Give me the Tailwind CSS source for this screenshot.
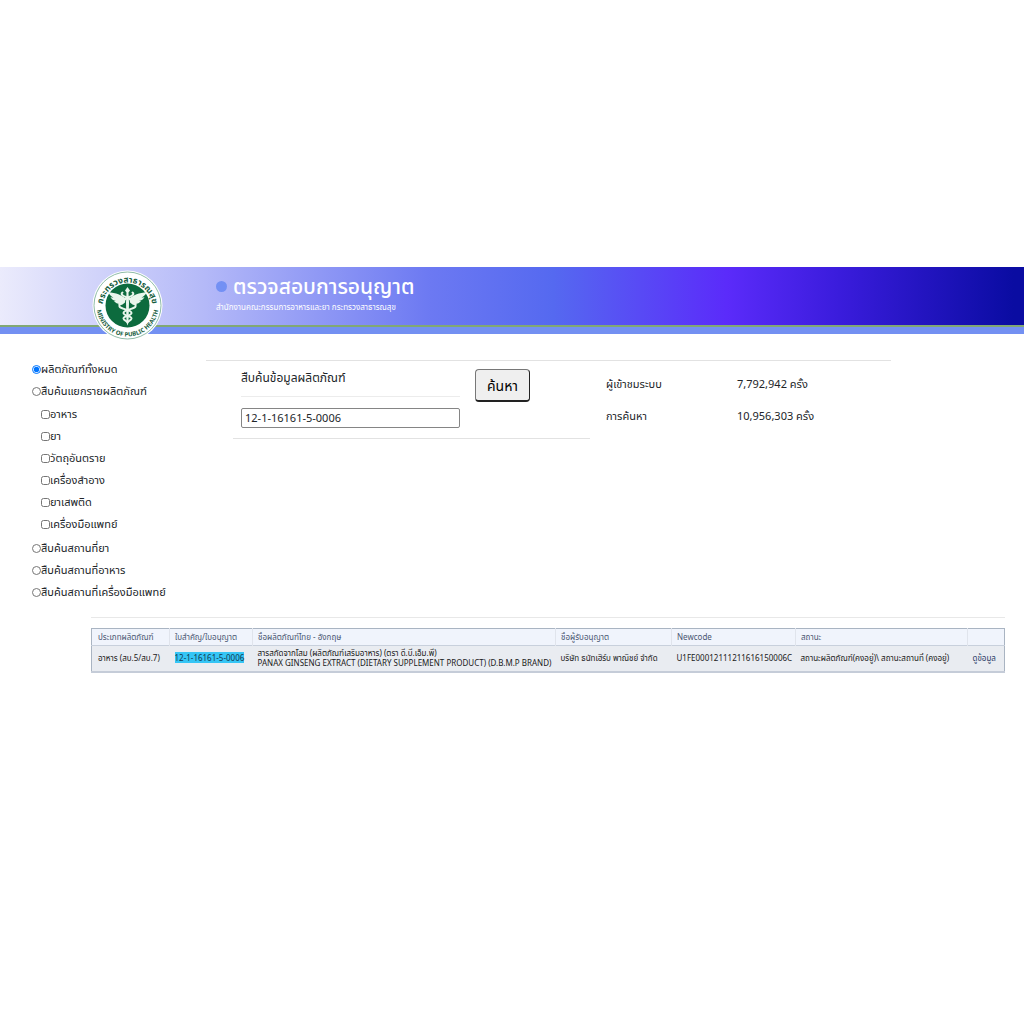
<!DOCTYPE html>
<html lang="th">
  <head>
    <meta charset="UTF-8" />
    <meta name="viewport" content="width=device-width, initial-scale=1.0" />
    <title>ตรวจสอบการอนุญาต</title>
    <script src="https://cdn.jsdelivr.net/npm/@tailwindcss/browser@4"></script>
  </head>
  <body class="bg-white pt-[267px] font-['Noto_Sans','Noto_Sans_Thai',sans-serif] text-[11px] text-[#212529]">
    <header class="relative">
      <div class="h-[58px] bg-[linear-gradient(90deg,#ebebfc_0%,#b4b9f8_20%,#6c79f2_42%,#5569f0_54%,#5b2bfa_71%,#3a1cdc_82%,#0a0ca2_99%)] pl-[216px] pt-[6px] text-white">
        <h1 class="flex items-center gap-[6px] text-[21px] font-medium leading-[26px]">
          <span class="size-[11px] rounded-full bg-[#7390f4]"></span>
          ตรวจสอบการอนุญาต
        </h1>
        <p class="text-[8px] leading-4">สำนักงานคณะกรรมการอาหารและยา กระทรวงสาธารณสุข</p>
      </div>
      <div class="h-[2px] bg-[#81a874]"></div>
      <div class="h-[7px] bg-[#7390f2]"></div>

      <!-- Ministry seal, hangs below the banner -->
      <svg class="absolute left-[92px] top-[3px] size-[71px]" viewBox="0 0 142 142" role="img" aria-label="Ministry of Public Health">
        <defs>
          <path id="arc-top" d="M21 75a50 50 0 0 1 100 0" />
          <path id="arc-bottom" d="M9 71a62 62 0 0 0 124 0" />
        </defs>
        <circle cx="71" cy="71" r="70" fill="#fff" />
        <circle cx="71" cy="71" r="67" fill="none" stroke="#6ba68b" stroke-width="1.5" />
        <circle cx="71" cy="71" r="44" fill="#0c6b3e" />
        <g fill="#155c3c" font-weight="700">
          <text font-size="17" text-anchor="middle"><textPath href="#arc-top" startOffset="50%">กระทรวงสาธารณสุข</textPath></text>
          <text font-size="12" text-anchor="middle"><textPath href="#arc-bottom" startOffset="50%">MINISTRY OF PUBLIC HEALTH</textPath></text>
        </g>
        <g fill="#e9f6ec">
          <path d="M67 57C60 50 48 46 32 44c3 6 7 9 11 11-2 0-4 0-6-1 2 5 6 7 11 8l-4 0c3 4 7 6 12 6l-3 2c5 1 9-1 13-5z" />
          <path d="M75 57C82 50 94 46 110 44c-3 6-7 9-11 11 2 0 4 0 6-1-2 5-6 7-11 8l4 0c-3 4-7 6-12 6l3 2c-5 1-9-1-13-5z" />
          <path d="M71 34l5 7-3 4 1 20-1 40-2 6-2-6-1-40 1-20-3-4z" />
        </g>
        <g fill="none" stroke="#e9f6ec" stroke-width="4" stroke-linecap="round">
          <path d="M61 45c-5 4 2 7 9 10 12 7 20 10 17 18-3 6-24 6-24 13 0 6 17 6 16 11-1 4-6 4-7 7" />
          <path d="M81 45c5 4-2 7-9 10-12 7-20 10-17 18 3 6 24 6 24 13 0 6-17 6-16 11 1 4 6 4 7 7" />
        </g>
      </svg>
    </header>

    <main>
      <div class="flex pt-[24px]">
        <form class="w-[206px] shrink-0 pl-8 leading-[22px]">
          <label class="flex items-center"><input type="radio" name="scope" checked class="size-[9px]" />ผลิตภัณฑ์ทั้งหมด</label>
          <label class="flex items-center"><input type="radio" name="scope" class="size-[9px]" />สืบค้นแยกรายผลิตภัณฑ์</label>
          <div class="mb-0.5 mt-px pl-[9px]">
            <label class="flex items-center"><input type="checkbox" class="size-[9px]" />อาหาร</label>
            <label class="flex items-center"><input type="checkbox" class="size-[9px]" />ยา</label>
            <label class="flex items-center"><input type="checkbox" class="size-[9px]" />วัตถุอันตราย</label>
            <label class="flex items-center"><input type="checkbox" class="size-[9px]" />เครื่องสำอาง</label>
            <label class="flex items-center"><input type="checkbox" class="size-[9px]" />ยาเสพติด</label>
            <label class="flex items-center"><input type="checkbox" class="size-[9px]" />เครื่องมือแพทย์</label>
          </div>
          <label class="flex items-center"><input type="radio" name="scope" class="size-[9px]" />สืบค้นสถานที่ยา</label>
          <label class="flex items-center"><input type="radio" name="scope" class="size-[9px]" />สืบค้นสถานที่อาหาร</label>
          <label class="flex items-center"><input type="radio" name="scope" class="size-[9px]" />สืบค้นสถานที่เครื่องมือแพทย์</label>
        </form>

        <section class="mr-[133px] mt-[2px] flex flex-1 items-start border-t border-[#e2e2e2]">
          <form class="ml-[27px] flex w-[357px] items-start border-b border-[#e2e2e2] pb-[10px] pl-2 pt-[7px]">
            <div class="w-[219px]">
              <label for="keyword" class="block border-b border-[#ececec] pb-[9px] text-[12px] leading-[19px]">สืบค้นข้อมูลผลิตภัณฑ์</label>
              <input id="keyword" type="text" value="12-1-16161-5-0006" class="mt-[11px] block h-5 w-full rounded-[2px] border border-[#858585] px-[3px] pb-px text-[11px]" />
            </div>
            <button type="button" class="ml-[15px] mt-px h-[33px] w-[55px] rounded-[4px] border border-b-2 border-[#222] border-t-[#777] border-l-[#777] bg-[#efefef] text-[14px] text-black">ค้นหา</button>
          </form>
          <dl class="ml-4 grid grid-cols-[131px_auto] gap-y-4 pt-[15px] leading-4">
            <dt>ผู้เข้าชมระบบ</dt>
            <dd>7,792,942 ครั้ง</dd>
            <dt>การค้นหา</dt>
            <dd>10,956,303 ครั้ง</dd>
          </dl>
        </section>
      </div>

      <section class="ml-[91px] mr-[19px] mt-[14px] border-t border-[#e8e8e8] pt-[10px]">
        <table class="w-full table-fixed border-collapse border border-[#a9b4c2] text-left text-[8px] leading-[10px]">
          <colgroup>
            <col class="w-[78px]" />
            <col class="w-[83px]" />
            <col class="w-[303px]" />
            <col class="w-[116px]" />
            <col class="w-[124px]" />
            <col class="w-[172px]" />
            <col />
          </colgroup>
          <thead class="bg-[#f0f4fc] text-[#4a5672]">
            <tr class="h-[17px] border-b border-[#c8d0dc]">
              <th class="border-r border-[#e0e4ec] px-[6px] font-normal">ประเภทผลิตภัณฑ์</th>
              <th class="border-r border-[#e0e4ec] px-[5px] font-normal">ใบสำคัญ/ใบอนุญาต</th>
              <th class="border-r border-[#e0e4ec] px-[5px] font-normal">ชื่อผลิตภัณฑ์ไทย - อังกฤษ</th>
              <th class="border-r border-[#e0e4ec] px-[5px] font-normal">ชื่อผู้รับอนุญาต</th>
              <th class="border-r border-[#e0e4ec] px-[5px] font-normal">Newcode</th>
              <th class="border-r border-[#e0e4ec] px-[5px] font-normal">สถานะ</th>
              <th></th>
            </tr>
          </thead>
          <tbody class="whitespace-nowrap bg-[#e9ecf1] text-[#1a1a1a]">
            <tr class="h-[26px] border-b-2 border-[#c5ccd8]">
              <td class="px-[6px]">อาหาร (สบ.5/สบ.7)</td>
              <td class="px-[5px]"><mark class="bg-[#35c5f5] text-[#123a52]">12-1-16161-5-0006</mark></td>
              <td class="px-[5px]">
                <div>สารสกัดจากโสม (ผลิตภัณฑ์เสริมอาหาร) (ตรา ดี.บี.เอ็ม.พี)</div>
                <div>PANAX GINSENG EXTRACT (DIETARY SUPPLEMENT PRODUCT) (D.B.M.P BRAND)</div>
              </td>
              <td class="px-[5px]">บริษัท ธนัทเฮิร์บ พาณิชย์ จำกัด</td>
              <td class="px-[5px]">U1FE00012111211616150006C</td>
              <td class="px-[5px]">สถานะผลิตภัณฑ์(คงอยู่)\ สถานะสถานที่ (คงอยู่)</td>
              <td class="px-[5px]"><a href="#" class="text-[#2b3a66]">ดูข้อมูล</a></td>
            </tr>
          </tbody>
        </table>
      </section>
    </main>
  </body>
</html>
